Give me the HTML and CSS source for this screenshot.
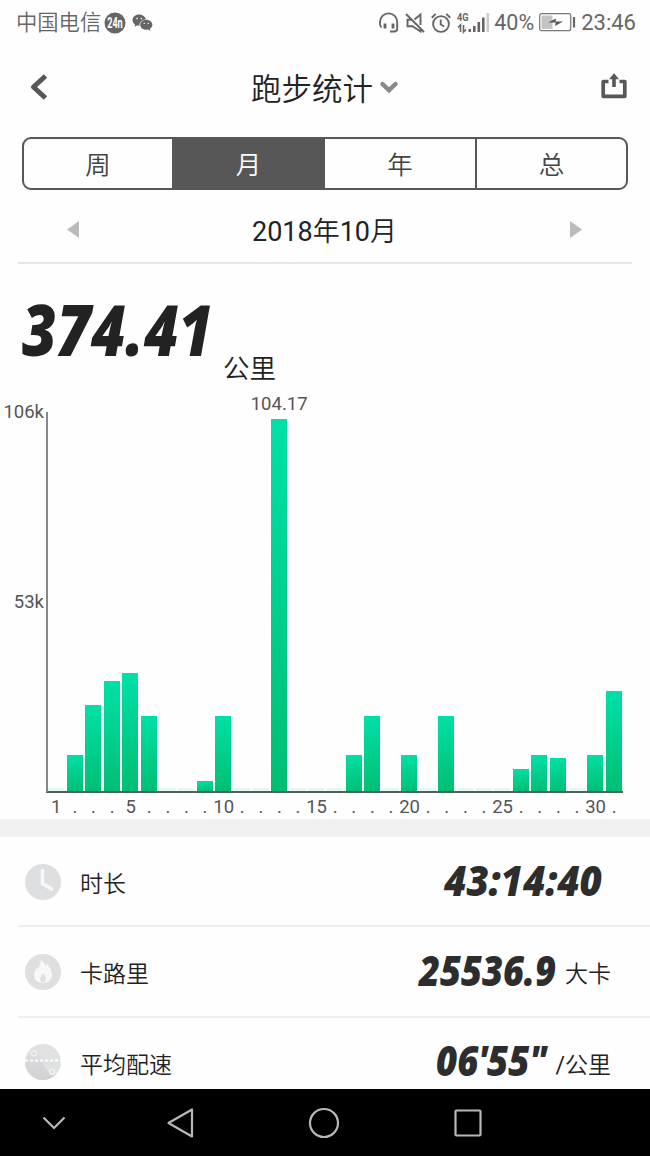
FILE: index.html
```html
<!DOCTYPE html>
<html lang="zh-CN">
<head>
    <meta charset="UTF-8">
    <meta name="viewport" content="width=device-width, initial-scale=1.0">
    <title>跑步统计</title>
    <link rel="stylesheet" href="styles.css">
</head>
<body>
    <div class="status-bar">
        <span class="carrier">中国电信</span>
        <svg class="badge-icon" width="22" height="22" viewBox="0 0 22 22">
            <circle cx="11" cy="11" r="10.5" fill="#666"/>
            <text x="3.2" y="16.200" textLength="15.500" lengthAdjust="spacingAndGlyphs">24n</text>
        </svg>
        <svg class="wechat-icon" width="21" height="18" viewBox="0 0 21 18">
            <path d="M7 .5C3.200.5.500 3 .5 6c0 1.900 1 3.500 2.600 4.500L2.500 12.800 5 11.400l2.500.400C14 11 14 8 14 6 13.800 3 11 .5 7 .5z" fill="#666"/>
            <ellipse cx="14.200" cy="11" rx="6.800" ry="5.800" fill="#fff"/>
            <path d="M14.200 5.800c-3.400 0-6 2.200-6 5s2.600 5 6 5l2-.3 2.200 1.400-.5-2c1.500-1 2.500-2.400 2.500-4.100 0-2.800-2.800-5-6.200-5z" fill="#666"/>
            <g fill="#fff">
                <circle cx="5" cy="4.600" r=".8"/><circle cx="9.300" cy="4.600" r=".8"/>
                <circle cx="12.200" cy="9.400" r=".7"/><circle cx="16.200" cy="9.400" r=".7"/>
            </g>
        </svg>
        <div class="status-right">
            <svg width="20" height="20" viewBox="0 0 20 20" fill="none" stroke="#666" stroke-width="1.900">
                <path d="M2.300 14.500C.8 12.500.8 10.500 1 9a8.600 8.600 0 0 1 17.200 0v6.500c0 2-1 3-3 3H11"/>
                <path d="M6 10.500v5M14 10.500v5" stroke-width="2.800"/>
            </svg>
            <svg width="20" height="20" viewBox="0 0 20 20" fill="none" stroke="#666" stroke-width="1.900">
                <path d="M1 1l18 18M15.500 12V1.500L9.500 6.500M7 6.800H2.500v6.500h5l8 5.200v-3.500"/>
            </svg>
            <svg width="20" height="20" viewBox="0 0 20 20" fill="none" stroke="#666" stroke-width="1.900">
                <circle cx="10" cy="11" r="7.900"/>
                <path d="M9.700 6.500v5l3.500 2M.8 4.700L4.700.9M19.200 4.700L15.300.9"/>
            </svg>
            <svg class="signal-icon" width="33" height="22" viewBox="0 0 33 22">
                <text x="0" y="8.500" textLength="11.500" lengthAdjust="spacingAndGlyphs">4G</text>
                <path d="M3.500 20v-7L1 15.500M6.500 13v7l2.500-2.500" fill="none" stroke="#666" stroke-width="1.600"/>
                <path d="M11.500 17h2.500v3h-2.500zM16 14h2.600v6H16zM20.500 10h2.600v10h-2.600zM25 5.500h2.600V20H25z" fill="#666"/>
                <path d="M29.500 1h2.600v19h-2.600z" fill="#ccc"/>
            </svg>
            <span class="percent">40%</span>
            <svg class="battery-icon" width="37" height="19" viewBox="0 0 37 19">
                <rect x=".7" y=".7" width="31" height="17" rx="2" fill="#fff" stroke="#777" stroke-width="1.200"/>
                <path d="M2.500 2.500h11v13.500h-11z" fill="#c4c4c4"/>
                <path d="M9 9.500l8-4-.5 3H24l-8 4.500.7-3.500z" fill="#555"/>
                <path d="M35 4v10.500" stroke="#666" stroke-width="2.200"/>
            </svg>
            <span class="time">23:46</span>
        </div>
    </div>

    <header class="header">
        <svg class="back-icon" width="20" height="28" viewBox="0 0 20 28" fill="none" stroke="#575757" stroke-width="5" stroke-linejoin="round">
            <path d="M17.500 3L5.500 14l12 11"/>
        </svg>
        <div class="header-title">
            <h1>跑步统计</h1>
            <svg width="18" height="13" viewBox="0 0 18 13" fill="none" stroke="#888" stroke-width="4.400" stroke-linecap="round">
                <path d="M2.500 3L9 9.300 15.500 3"/>
            </svg>
        </div>
        <svg class="share-icon" width="26" height="26" viewBox="0 0 26 26">
            <path d="M7.500 8.500H2.200V23.300H23.800V8.500H18.500" fill="none" stroke="#575757" stroke-width="3.700" stroke-linejoin="round"/>
            <path d="M13 .3l5 6h-3.200V14h-3.600V6.300H8z" fill="#575757"/>
        </svg>
    </header>

    <nav class="tabs">
        <div class="tab">周</div>
        <div class="tab active">月</div>
        <div class="tab">年</div>
        <div class="tab">总</div>
    </nav>

    <div class="month-picker">
        <svg width="12" height="17" viewBox="0 0 12 17"><path d="M12 0v17L0 8.500z" fill="#bbb"/></svg>
        <span>2018年10月</span>
        <svg width="12" height="17" viewBox="0 0 12 17"><path d="M0 0v17l12-8.500z" fill="#bbb"/></svg>
    </div>

    <div class="total">
        <svg class="num num-total" width="196" height="60">
            <text x="0" y="53" textLength="191" lengthAdjust="spacingAndGlyphs">374.41</text>
        </svg>
        <span class="total-unit">公里</span>
    </div>

    <section class="chart">
        <div class="y-axis">
            <span>106k</span>
            <span>53k</span>
        </div>
        <div class="plot">
            <div class="bars" id="bars"></div>
            <div class="days" id="days"></div>
        </div>
    </section>

    <div class="divider"></div>

    <ul class="stats">
        <li class="stat">
            <svg class="stat-icon" width="38" height="38" viewBox="0 0 38 38">
                <circle cx="19" cy="19" r="18" fill="#dedfe1"/>
                <path d="M18.500 7.500v13l9 5.500" fill="none" stroke="#f8f8f8" stroke-width="3.600" stroke-linecap="round"/>
            </svg>
            <span class="stat-name">时长</span>
            <svg class="num duration" width="166" height="40">
                <text x="2" y="34" textLength="158" lengthAdjust="spacingAndGlyphs">43:14:40</text>
            </svg>
        </li>
        <li class="stat">
            <svg class="stat-icon" width="38" height="38" viewBox="0 0 38 38">
                <circle cx="19" cy="19" r="18" fill="#dedfe1"/>
                <path d="M16.500 7c3 1.500 4.500 3.500 5 6l1.500-2.500c3 4 5 7.500 5 11.500 0 5-4 8-9 8s-9-3-9-8c0-3 1.500-5.500 2.500-7.500l1 1.500c2-2.500 3.500-5 3-9z" fill="#f8f8f8"/>
                <path d="M19 20.500c1.800 1.500 2.800 3 2.800 5.500 0 2-1 3.500-2.800 3.500s-2.800-1.500-2.800-3.500c0-2.500 1-4 2.800-5.500z" fill="#dedfe1"/>
            </svg>
            <span class="stat-name">卡路里</span>
            <svg class="num" width="146" height="40">
                <text x="2" y="34" textLength="137" lengthAdjust="spacingAndGlyphs">25536.9</text>
            </svg>
            <span class="stat-unit">大卡</span>
        </li>
        <li class="stat">
            <svg class="stat-icon" width="38" height="38" viewBox="0 0 38 38">
                <defs>
                    <linearGradient id="pace" x1="0" y1="0" x2="0" y2="1">
                        <stop offset="0" stop-color="#dcdcdd"/>
                        <stop offset="1" stop-color="#d0d1d3"/>
                    </linearGradient>
                </defs>
                <circle cx="19" cy="19" r="18" fill="#e0e1e2"/>
                <path d="M1 19C2 14 6 9 10 9.500c8 1 9 20 21 23A18 18 0 0 1 1 19z" fill="url(#pace)"/>
                <path d="M1 17.500h37" stroke="#fff" stroke-width="1.800" stroke-dasharray="3 2"/>
                <circle cx="10" cy="10.500" r="2.500" fill="#ddd" stroke="#f6f6f6" stroke-width="1.200"/>
                <circle cx="28" cy="28.500" r="2.500" fill="#ddd" stroke="#f6f6f6" stroke-width="1.200"/>
            </svg>
            <span class="stat-name">平均配速</span>
            <svg class="num" width="120" height="40">
                <text x="2" y="34" textLength="110" lengthAdjust="spacingAndGlyphs">06'55"</text>
            </svg>
            <span class="stat-unit">/公里</span>
        </li>
    </ul>

    <footer class="nav-bar">
        <svg class="nav-hide" width="24" height="16" viewBox="0 0 24 16"><path d="M1.500 2.500L12 13 22.500 2.500"/></svg>
        <svg width="28" height="32" viewBox="0 0 28 32"><path d="M26 2.500v27L2.500 16z"/></svg>
        <svg width="32" height="32" viewBox="0 0 32 32"><circle cx="16" cy="16" r="14"/></svg>
        <svg width="28" height="28" viewBox="0 0 28 28"><rect x="1.500" y="1.500" width="25" height="25" rx="1"/></svg>
    </footer>

    <script src="script.js"></script>
</body>
</html>
```
FILE: styles.css
```css
* {
    margin: 0;
    padding: 0;
    box-sizing: border-box;
}

body {
    font-family: Roboto, "Noto Sans CJK SC DemiLight", "Noto Sans CJK SC", sans-serif;
    background-color: #fefefe;
    color: #222222;
    width: 650px;
    height: 1156px;
    overflow: hidden;
    display: flex;
    flex-direction: column;
}

svg {
    display: block;
    flex-shrink: 0;
    overflow: visible;
}

/* Status bar */
.status-bar {
    height: 45px;
    flex-shrink: 0;
    padding: 0 14px 0 16px;
    display: flex;
    align-items: center;
    color: #666666;
    font-size: 22px;
    line-height: 45px;
}

.carrier {
    font-size: 21.3px;
    font-weight: 350;
}

.badge-icon {
    margin-left: 3px;
}

.badge-icon text {
    font-family: Roboto, sans-serif;
    font-size: 14.5px;
    font-weight: bold;
    fill: #ffffff;
}

.wechat-icon {
    margin-left: 6px;
}

.status-right {
    margin-left: auto;
    display: flex;
    align-items: center;
    gap: 6px;
}

.signal-icon {
    margin-right: -2px;
}

.signal-icon text {
    font-family: Roboto, sans-serif;
    font-size: 11px;
    font-weight: bold;
    fill: #666666;
}

.percent {
    font-size: 21.5px;
    margin-right: -1px;
}

.battery-icon {
    margin-right: -1px;
}

/* Header */
.header {
    height: 92px;
    flex-shrink: 0;
    padding: 0 23px 7px 28px;
    display: flex;
    align-items: center;
    justify-content: space-between;
}

.back-icon {
    margin-bottom: 2px;
}

.share-icon {
    margin-bottom: 4px;
}

.header-title {
    display: flex;
    align-items: center;
    gap: 7px;
}

.header-title h1 {
    padding-top: 4px;
    font-size: 30.5px;
    font-weight: 350;
    line-height: 40px;
}

/* Week / month / year / total */
.tabs {
    height: 53px;
    margin: 0 22px;
    flex-shrink: 0;
    display: grid;
    grid-template-columns: 148px 153px 150px 1fr;
    border: 2px solid #575757;
    border-radius: 9px;
    overflow: hidden;
}

.tab {
    text-align: center;
    font-size: 25.5px;
    font-weight: 350;
    line-height: 53px;
    color: #444444;
}

.tab:last-child {
    border-left: 2px solid #575757;
}

.tab.active {
    background-color: #575757;
    color: #ffffff;
}

.month-picker {
    height: 74px;
    margin: 0 18px;
    padding: 6px 50px 0 49px;
    flex-shrink: 0;
    display: flex;
    align-items: center;
    justify-content: space-between;
    border-bottom: 2px solid #e6e6e6;
    font-size: 27px;
}

.month-picker span {
    padding-top: 1px;
}

/* Total distance */
.total {
    height: 136px;
    padding: 39px 0 0 22px;
    flex-shrink: 0;
    display: flex;
    align-items: flex-start;
}

.num text {
    font-family: "Open Sans", sans-serif;
    font-size: 42px;
    font-weight: 800;
    font-style: italic;
    fill: #2d2d2d;
}

.num-total text {
    font-size: 70px;
    fill: #222222;
}

.total-unit {
    margin: 46px 0 0 5px;
    font-size: 26.5px;
    font-weight: 350;
    line-height: 40px;
}

/* Chart */
.chart {
    height: 419px;
    flex-shrink: 0;
    display: flex;
    color: #555555;
    font-size: 18.5px;
}

.y-axis {
    width: 46px;
    padding-right: 2px;
    text-align: right;
}

.y-axis span {
    display: block;
    height: 190px;
    line-height: 24px;
}

.plot {
    width: 577px;
    padding-top: 12px;
}

.bars {
    height: 381px;
    border-left: 2px solid #888888;
    border-bottom: 2px solid #4f6159;
    display: grid;
    grid-template-columns: repeat(31, 18.6px);
    align-items: end;
}

.bar {
    width: 16px;
    position: relative;
    background: linear-gradient(170deg, #00e1a8, #00be73);
}

.bar.empty {
    height: 3px;
    background: #e3f8f0;
}

.bar-value {
    position: absolute;
    left: 50%;
    bottom: 100%;
    transform: translateX(-50%);
    line-height: 30px;
}

.days {
    margin-left: 1px;
    display: grid;
    grid-template-columns: repeat(31, 18.6px);
}

.day {
    display: flex;
    justify-content: center;
    line-height: 28px;
}

.divider {
    height: 18px;
    flex-shrink: 0;
    background-color: #f0f0f0;
}

/* Stats */
.stats {
    list-style: none;
    height: 252px;
    flex-shrink: 0;
    overflow: hidden;
}

.stat {
    height: 90.5px;
    margin-left: 18px;
    padding: 1px 39px 0 6px;
    display: flex;
    align-items: center;
    border-bottom: 2px solid #efefef;
}

.stat:first-child {
    height: 90px;
}

.stat-name {
    margin: 1px auto 0 18px;
    font-size: 23px;
    font-weight: 350;
}

.stat-unit {
    margin-top: 1px;
    margin-left: 2px;
    font-size: 23px;
}

.duration {
    margin-right: 3px;
}

/* System navigation */
.nav-bar {
    height: 67px;
    flex-shrink: 0;
    padding-left: 42px;
    display: flex;
    align-items: center;
    gap: 114px;
    background-color: #000000;
}

.nav-bar svg {
    fill: none;
    stroke: #b8b8b8;
    stroke-width: 2.2;
    stroke-linejoin: round;
}

.nav-bar .nav-hide {
    margin-right: -14px;
}
```
FILE: script.js
```js
// distance per day of the month, in km
const distances = [
    0, 10, 24.2, 30.8, 32.9, 21, 0, 0, 2.9, 21,
    0, 0, 104.17, 0, 0, 0, 10.2, 21, 0, 10,
    0, 21, 0, 0, 0, 6.2, 10, 9.2, 0, 10, 28.1
];
const pxPerKm = 3.572;
const max = Math.max(...distances);

const bars = document.getElementById('bars');
const days = document.getElementById('days');

distances.forEach((km, i) => {
    const bar = document.createElement('div');
    bar.className = km ? 'bar' : 'bar empty';
    if (km) bar.style.height = km * pxPerKm + 'px';
    if (km === max) {
        const value = document.createElement('span');
        value.className = 'bar-value';
        value.textContent = km;
        bar.appendChild(value);
    }
    bars.appendChild(bar);

    const n = i + 1;
    const day = document.createElement('span');
    day.className = 'day';
    day.textContent = n === 1 || n % 5 === 0 ? n : '.';
    days.appendChild(day);
});
```
